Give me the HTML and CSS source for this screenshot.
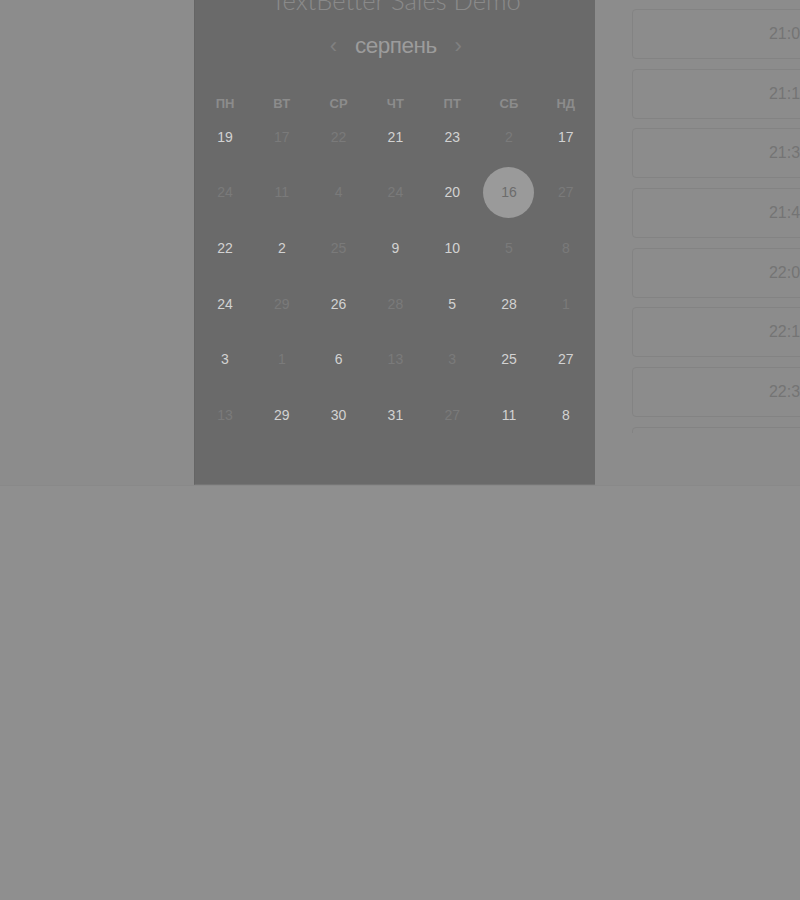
FILE: index.html
```html
<!DOCTYPE html>
<html lang="uk">
<head>
<meta charset="utf-8">
<title>TextBetter Sales Demo</title>
<link rel="stylesheet" href="styles.css">
</head>
<body>
<div class="page">
  <div class="left"></div>
  <section class="calendar">
    <h1 class="title">TextBetter Sales Demo</h1>
    <div class="month">
      <span class="arrow">‹</span>
      <span class="month-name">серпень</span>
      <span class="arrow">›</span>
    </div>
    <div class="weekdays">
      <span>ПН</span><span>ВТ</span><span>СР</span><span>ЧТ</span><span>ПТ</span><span>СБ</span><span>НД</span>
    </div>
    <div class="days">
      <span class="on">19</span><span>17</span><span>22</span><span class="on">21</span><span class="on">23</span><span>2</span><span class="on">17</span>
      <span>24</span><span>11</span><span>4</span><span>24</span><span class="on">20</span><span class="sel"><i>16</i></span><span>27</span>
      <span class="on">22</span><span class="on">2</span><span>25</span><span class="on">9</span><span class="on">10</span><span>5</span><span>8</span>
      <span class="on">24</span><span>29</span><span class="on">26</span><span>28</span><span class="on">5</span><span class="on">28</span><span>1</span>
      <span class="on">3</span><span>1</span><span class="on">6</span><span>13</span><span>3</span><span class="on">25</span><span class="on">27</span>
      <span>13</span><span class="on">29</span><span class="on">30</span><span class="on">31</span><span>27</span><span class="on">11</span><span class="on">8</span>
    </div>
  </section>
  <div class="slots">
    <div class="slot">21:00</div>
    <div class="slot">21:15</div>
    <div class="slot">21:30</div>
    <div class="slot">21:45</div>
    <div class="slot">22:00</div>
    <div class="slot">22:15</div>
    <div class="slot">22:30</div>
    <div class="slot">22:45</div>
  </div>
</div>
</body>
</html>
```
FILE: styles.css
```css
html, body {
  margin: 0;
  padding: 0;
}
body {
  background: #8f8f8f;
  overflow: hidden;
  font-family: "Liberation Sans", Arial, sans-serif;
  width: 800px;
  height: 900px;
}
.page {
  display: flex;
  height: 486px;
  background: #8c8c8c;
  border-bottom: 1px solid #898989;
  box-sizing: border-box;
}
.left {
  width: 194px;
  flex-shrink: 0;
}
.calendar {
  width: 401px;
  flex-shrink: 0;
  background: #6a6a6a;
  border-left: 1px solid #656565;
  border-bottom: 1px solid #757575;
  box-sizing: border-box;
  padding-left: 1.6px;
  overflow: hidden;
}
.title {
  margin: -15px 0 0;
  font-family: Lato, "Open Sans", sans-serif;
  font-weight: 300;
  font-size: 25.5px;
  line-height: 30px;
  color: #8a8a8a;
  text-align: center;
  white-space: nowrap;
}
.month {
  display: flex;
  justify-content: center;
  align-items: center;
  gap: 18px;
  margin-top: 19px;
  height: 24px;
}
.month-name {
  font-size: 22.5px;
  color: #9c9c9c;
  letter-spacing: -0.5px;
}
.arrow {
  font-size: 22px;
  color: #808080;
}
.weekdays {
  display: grid;
  grid-template-columns: repeat(7, 56.8px);
  margin-top: 40px;
  height: 11px;
  line-height: 11px;
  font-size: 13px;
  font-weight: bold;
  color: #8c8c8c;
  text-align: center;
}
.days {
  display: grid;
  grid-template-columns: repeat(7, 56.8px);
  grid-auto-rows: 55.6px;
  font-size: 14px;
  color: #7a7a7a;
  text-align: center;
}
.days span {
  display: flex;
  align-items: center;
  justify-content: center;
}
.days .on {
  color: #d2d2d2;
}
.days .sel i {
  font-style: normal;
  width: 51px;
  height: 51px;
  border-radius: 50%;
  background: #9a9a9a;
  color: #6c6c6c;
  display: flex;
  align-items: center;
  justify-content: center;
}
.slots {
  flex-shrink: 0;
  width: 314px;
  margin-left: 37px;
  padding-top: 9px;
  height: 433px;
  box-sizing: border-box;
  overflow: hidden;
  display: flex;
  flex-direction: column;
  gap: 9.7px;
}
.slot {
  flex-shrink: 0;
  height: 50px;
  box-sizing: border-box;
  border: 1px solid #838383;
  border-radius: 4px;
  display: flex;
  align-items: center;
  justify-content: center;
  font-size: 16px;
  color: #747474;
}
```
